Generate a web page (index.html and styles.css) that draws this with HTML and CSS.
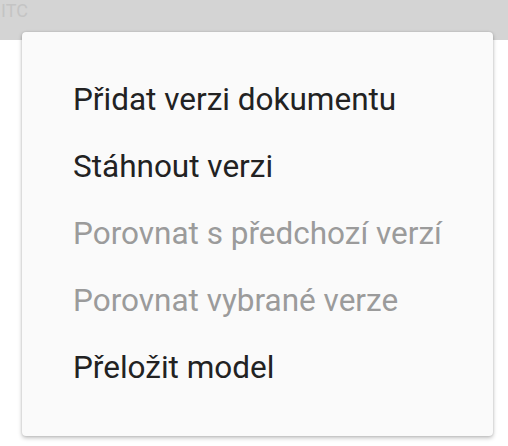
FILE: index.html
```html
<!DOCTYPE html>
<html>
<head>
<meta charset="utf-8">
<link rel="stylesheet" href="styles.css">
</head>
<body>
<div class="header"><span class="header-text">ITC</span></div>
<div class="menu">
  <div class="item">Přidat verzi dokumentu</div>
  <div class="item">Stáhnout verzi</div>
  <div class="item disabled">Porovnat s předchozí verzí</div>
  <div class="item disabled">Porovnat vybrané verze</div>
  <div class="item">Přeložit model</div>
</div>
</body>
</html>
```
FILE: styles.css
```css
html, body {
  margin: 0;
  padding: 0;
  width: 508px;
  height: 446px;
  background: #ffffff;
  font-family: Roboto, "Noto Sans", sans-serif;
  overflow: hidden;
}
.header {
  height: 40px;
  background: #d4d4d4;
  overflow: hidden;
}
.header-text {
  display: block;
  padding: 1px 0 0 1px;
  font-size: 18px;
  line-height: 20px;
  color: #c4c4c4;
}
.menu {
  position: absolute;
  left: 22px;
  top: 32px;
  width: 471px;
  height: 404px;
  box-sizing: border-box;
  background: #fafafa;
  border-radius: 4px;
  box-shadow: 0 2px 4px rgba(0,0,0,0.25), 0 0 2px rgba(0,0,0,0.15);
  padding: 34px 0 0 51px;
  display: flex;
  flex-direction: column;
}
.item {
  height: 67px;
  line-height: 67px;
  font-size: 31.5px;
  color: #222222;
  white-space: nowrap;
}
.item.disabled {
  color: #9b9b9b;
}
```
